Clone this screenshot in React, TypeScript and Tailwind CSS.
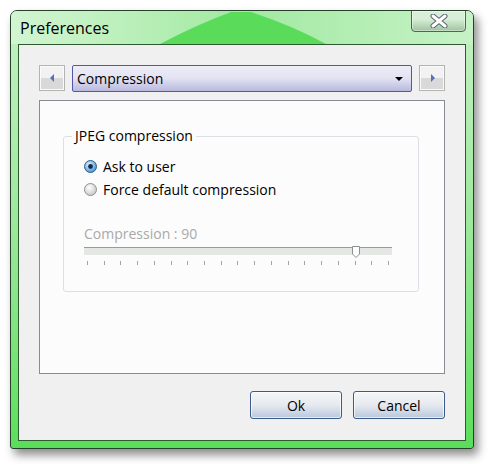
import React from "react";

// Ticks under the compression slider
const ticks = Array.from({ length: 19 }, (_, i) => i);

const ArrowButton = ({ dir }: { dir: "left" | "right" }) => (
  <button className="flex h-[26px] w-[26px] shrink-0 items-center justify-center border border-[#b4b4b4] bg-gradient-to-b from-[#f2f2f2] from-50% to-[#d9d9d9] to-50% shadow-[inset_0_0_0_1px_#fafafa]">
    <svg width="5" height="8" viewBox="0 0 5 8">
      {dir === "left" ? (
        <path d="M4 0 L0 4 L4 8 Z" fill="#5b6fb3" />
      ) : (
        <path d="M1 0 L5 4 L1 8 Z" fill="#5b6fb3" />
      )}
    </svg>
  </button>
);

const Radio = ({ checked }: { checked?: boolean }) => (
  <svg width="13" height="13" viewBox="0 0 13 13" className="shrink-0">
    <defs>
      <radialGradient id={checked ? "rOn" : "rOff"} cx="40%" cy="35%" r="70%">
        <stop offset="0%" stopColor={checked ? "#e6f4fc" : "#ffffff"} />
        <stop offset="100%" stopColor={checked ? "#3d8ed0" : "#c6c6c6"} />
      </radialGradient>
    </defs>
    <circle cx="6.5" cy="6.5" r="6" fill={`url(#${checked ? "rOn" : "rOff"})`} stroke={checked ? "#2c628b" : "#8f8f8f"} strokeWidth="1" />
    {checked && <circle cx="6.5" cy="6.5" r="2.4" fill="#0f2d52" />}
  </svg>
);

const DialogButton = ({ label }: { label: string }) => (
  <button className="h-[28px] w-[92px] rounded-[3px] border border-[#3c5a8a] bg-gradient-to-b from-[#f4f6f8] via-[#e6eaef] via-50% to-[#b9c8dc] text-[14px] text-black shadow-[inset_0_0_0_1px_#ffffffaa]">
    {label}
  </button>
);

export default function App() {
  return (
    <div
      className="min-h-[468px] w-[493px] bg-white pl-[10px] pt-[10px]"
      style={{ fontFamily: '"Segoe UI", "Open Sans", "Noto Sans", sans-serif' }}
    >
      <div className="flex h-[439px] w-[464px] flex-col rounded-t-[7px] rounded-b-[3px] border border-[#26402a] bg-gradient-to-b from-[#c4f1c4] via-[#9be89b] to-[#5ade5a] shadow-[4px_6px_10px_rgba(0,0,0,0.45)]">
        {/* title bar */}
        <div className="relative flex h-[33px] items-start justify-between overflow-hidden rounded-t-[6px] bg-gradient-to-r from-[#d2f5d2] via-[#a2e9a2] to-[#c6f2c6]">
          <svg className="absolute left-0 top-0" width="462" height="33" viewBox="0 0 462 33">
            <path d="M220 1 L240 1 Q280 14 315 33 L149 33 Q185 14 220 1 Z" fill="#5adc5a" />
          </svg>
          <span className="relative ml-[9px] mt-[6px] text-[16px] leading-[22px] text-black">Preferences</span>
          <button className="relative mr-[7px] flex h-[22px] w-[55px] -mt-px items-center justify-center rounded-b-[4px] border border-[#4a6a4a] bg-gradient-to-b from-[#d9eed9] from-40% to-[#9ec49e] shadow-[inset_0_0_0_1px_#ffffff66]">
            <svg width="18" height="14" viewBox="0 0 18 14">
              <path d="M3 2 L15 12 M15 2 L3 12" stroke="#5a6470" strokeWidth="5" strokeLinecap="round" />
              <path d="M3 2 L15 12 M15 2 L3 12" stroke="#ffffff" strokeWidth="3" strokeLinecap="round" />
            </svg>
          </button>
        </div>

        {/* client area */}
        <div className="mx-[7px] flex h-[397px] flex-col border border-[#2f5a2f] bg-[#f0f0f0] px-[20px] pt-[20px]">
          <div className="flex h-[27px] items-start gap-[7px]">
            <ArrowButton dir="left" />
            <div className="flex h-[27px] flex-1 items-center justify-between rounded-[2px] border border-[#5656a6] bg-gradient-to-b from-[#eeeef8] via-[#e2e2f2] via-50% to-[#b9b9df] pl-[4px] pr-[8px]">
              <span className="text-[14px] text-black">Compression</span>
              <svg width="8" height="4" viewBox="0 0 8 4">
                <path d="M0 0 L8 0 L4 4 Z" fill="#000" />
              </svg>
            </div>
            <ArrowButton dir="right" />
          </div>

          {/* panel */}
          <div className="mt-[8px] h-[274px] border border-[#898c95] bg-[#fcfcfc] pl-[23px] pt-[26px]">
            <fieldset className="w-[356px] rounded-[3px] border border-[#dcdfe3] px-[20px] pb-[26px]">
              <legend className="-ml-[12px] px-[3px] text-[14px] leading-[18px] text-black">JPEG compression</legend>
              <div className="mt-[10px] flex h-[23px] items-center gap-[6px] text-[14px] text-black">
                <Radio checked />
                <span>Ask to user</span>
              </div>
              <div className="flex h-[23px] items-center gap-[6px] text-[14px] text-black">
                <Radio />
                <span>Force default compression</span>
              </div>
              <div className="mt-[23px] text-[14px] leading-[20px] text-[#a9a9a9]">Compression : 90</div>
              <div className="relative mt-[3px] h-[8px] w-[308px] border-t border-[#9a9a9a] bg-[#e4e7e4]">
                <svg className="absolute left-[268px] -top-[2px]" width="8" height="12" viewBox="0 0 8 12">
                  <path d="M0.5 0.5 L7.5 0.5 L7.5 8 L4 11.5 L0.5 8 Z" fill="#fdfdfd" stroke="#8d9090" strokeWidth="1" />
                </svg>
              </div>
              <div className="mt-[6px] flex w-[308px] justify-between px-[3px]">
                {ticks.map((t) => (
                  <span key={t} className="h-[4px] w-px bg-[#a4a4a4]" />
                ))}
              </div>
            </fieldset>
          </div>

          <div className="mt-[17px] flex justify-end gap-[11px]">
            <DialogButton label="Ok" />
            <DialogButton label="Cancel" />
          </div>
        </div>
      </div>
    </div>
  );
}
